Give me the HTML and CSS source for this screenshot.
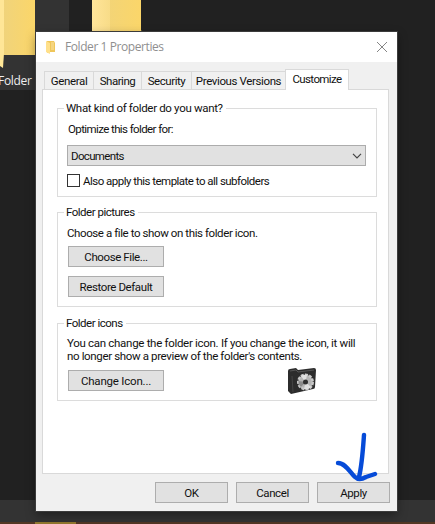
FILE: index.html
```html
<!DOCTYPE html>
<html lang="en">
<head>
<meta charset="utf-8">
<title>Folder 1 Properties</title>
<link rel="stylesheet" href="styles.css">
</head>
<body>
<div class="desktop">
  <div class="tile"></div>
  <svg class="desk-folders" width="150" height="72" viewBox="0 0 150 72">
    <defs>
      <linearGradient id="back" x1="0" x2="1"><stop offset="0" stop-color="#efd37d"/><stop offset="1" stop-color="#fbd669"/></linearGradient>
      <linearGradient id="front" x1="0" x2="1"><stop offset="0" stop-color="#ffe59a"/><stop offset="1" stop-color="#f8dc88"/></linearGradient>
    </defs>
    <path d="M0 0H35V55H0Z" fill="url(#back)"/>
    <path d="M0 0H4V53L3 68L0 66Z" fill="#ffe697"/>
    <path d="M92 0H141V30L142 32H92Z" fill="url(#back)"/>
    <path d="M92 0H110V32H92Z" fill="url(#front)"/>
  </svg>
  <span class="desk-label">Folder 1</span>
  <div class="taskbar"><div class="accent"></div></div>

  <main class="window">
    <header class="titlebar">
      <svg width="10" height="14" viewBox="0 0 10 14"><path d="M1 1H8L9 3V12H4L1 13Z" fill="#efc65a"/><path d="M0 1L4 3V14L0 12Z" fill="#ffe08a"/><path d="M5 2H8V10H5Z" fill="#f5d580"/></svg>
      <h1>Folder 1 Properties</h1>
      <svg class="close" width="12" height="12" viewBox="0 0 12 12"><path d="M1 1L11 11M11 1L1 11" stroke="#858585" fill="none"/></svg>
    </header>
    <nav class="tabs">
      <span class="tab t1">General</span><span class="tab t2">Sharing</span><span class="tab t3">Security</span><span class="tab t4">Previous Versions</span><span class="tab active">Customize</span>
    </nav>
    <section class="panel">
      <div class="group kind">
        <h2>What kind of folder do you want?</h2>
        <p class="s1">Optimize this folder for:</p>
        <div class="select"><span>Documents</span><svg width="10" height="6" viewBox="0 0 10 6"><path d="M1 .8L5 4.8L9 .8" stroke="#444" stroke-width="1.2" fill="none"/></svg></div>
        <div class="check"><i></i><span>Also apply this template to all subfolders</span></div>
      </div>
      <div class="group pictures">
        <h2>Folder pictures</h2>
        <p class="s2">Choose a file to show on this folder icon.</p>
        <div class="btn">Choose File...</div>
        <div class="btn">Restore Default</div>
      </div>
      <div class="group icons">
        <h2>Folder icons</h2>
        <p class="s3">You can change the folder icon. If you change the icon, it will</p>
        <p class="s4">no longer show a preview of the folder's contents.</p>
        <div class="row">
          <div class="btn change">Change Icon...</div>
          <svg class="cam" width="30" height="28" viewBox="0 0 30 28">
            <path d="M1 4Q1 2 3 2L9 1L11 3L27 1Q29 1 29 3L28 20Q28 22 26 22L4 27L1 24Z" fill="#2c2c2c"/>
            <path d="M3 4L9 3L11 5L27 3" stroke="#555" fill="none"/>
            <path d="M5 9L6 25" stroke="#444"/>
            <circle cx="18.500" cy="15" r="7.300" fill="#b5b5b5" stroke="#c9c9c9" stroke-width="2.400" stroke-dasharray="3 1.200"/>
            <path d="M18.500 15L14 9A7 7 0 0 1 20 8ZM18.500 15L24 20A7 7 0 0 1 17 22Z" fill="#e0e0e0"/>
            <path d="M18.500 15L11.500 14A7 7 0 0 0 14 20Z" fill="#8b8b8b"/>
            <circle cx="18.500" cy="15" r="2.500" fill="#303030"/>
          </svg>
        </div>
      </div>
    </section>
    <footer>
      <div class="btn">OK</div><div class="btn">Cancel</div><div class="btn">Apply</div>
    </footer>
  </main>
  <svg class="arrow" width="46" height="52" viewBox="0 0 46 52"><path d="M29 4C28 18 27 34 24 46M3 32C11 32 16 43 20 46Q24 50 31 46L40 43" fill="none" stroke="#064bd8" stroke-width="4.400" stroke-linecap="round" stroke-linejoin="round"/></svg>
</div>
</body>
</html>
```
FILE: styles.css
```css
* { box-sizing: border-box; }
body { margin: 0; font: 11.5px/14px Roboto, "Liberation Sans", sans-serif; color: #111; }
h1, h2, p { margin: 0; font-weight: 400; white-space: nowrap; }
svg { display: block; flex: none; }
.desktop { position: relative; width: 435px; height: 524px; overflow: hidden; background: #212121; }
.tile { position: absolute; left: 0; top: 0; width: 69px; height: 90px; background: #333; }
.desk-folders { position: absolute; left: 0; top: 0; }
.desk-label { position: absolute; left: -2px; top: 74px; color: #eee; font: 12px/14px "Open Sans", sans-serif; letter-spacing: -.3px; word-spacing: 2px; white-space: nowrap; }
.taskbar { position: absolute; left: 0; right: 0; top: 500px; height: 24px; background: #333; border-bottom: 2px solid #533724; }
.accent { position: absolute; left: 35px; bottom: -2px; width: 41px; height: 2px; background: #92782e; }
.window { position: absolute; left: 36px; top: 32px; width: 361px; height: 479px; background: #f0f0f0; box-shadow: 0 0 0 1px #3b3b3b, 0 4px 10px #0006; display: flex; flex-direction: column; }
.titlebar { height: 30px; background: #fff; display: flex; align-items: center; padding: 0 9px 0 10px; }
h1 { margin-left: 9px; font: 12px/16px "Open Sans", sans-serif; letter-spacing: -.42px; color: #8f8f8f; }
.close { margin-left: auto; }
.tabs { height: 27px; padding-left: 8px; display: flex; align-items: flex-end; }
.tab { height: 18px; padding-top: 2px; border: 1px solid #d9d9d9; border-width: 1px 0 0 1px; text-align: center; white-space: nowrap; }
.t1 { width: 49px; letter-spacing: -.35px; }
.t2 { width: 48px; letter-spacing: -.5px; }
.t3 { width: 50px; letter-spacing: -.45px; }
.t4 { width: 94px; letter-spacing: -.38px; }
.active { width: 64px; height: 21px; margin-bottom: -1px; background: #fff; border-right-width: 1px; letter-spacing: -.6px; z-index: 1; }
.panel { width: 347px; height: 385px; margin-left: 6px; padding: 18px 11px 0 14px; background: #fff; border: 1px solid #d9d9d9; }
.group { border: 1px solid #dcdcdc; padding: 0 10px 0 9px; }
h2 { width: max-content; margin: -8px 0 0 -3px; padding: 0 3px 0 2px; background: #fff; font-size: 11.5px; line-height: 14px; letter-spacing: -.5px; }
.kind { height: 89px; }
.kind h2 { letter-spacing: -.33px; }
.kind p { margin: 7px 0 0 1px; letter-spacing: -.6px; }
.select { height: 21px; margin: 9px 0 0; padding: 0 3px 0 3px; display: flex; align-items: center; justify-content: space-between; background: #e1e1e1; border: 1px solid #acacac; letter-spacing: -.65px; }
.check { display: flex; align-items: center; gap: 3px; margin-top: 8px; height: 13px; white-space: nowrap; letter-spacing: -.52px; }
.check i { width: 13px; height: 13px; border: 1px solid #333; }
.pictures { height: 95px; margin-top: 15px; }
.pictures p { margin: 7px 0 6px 0; letter-spacing: -.41px; }
.btn { height: 21px; background: #e1e1e1; border: 1px solid #adadad; display: flex; align-items: center; justify-content: center; white-space: nowrap; letter-spacing: -.4px; }
.group .btn { width: 96px; margin-left: 1px; }
.group .change { letter-spacing: -.2px; }
.pictures .btn + .btn { margin-top: 9px; }
.icons { height: 78px; margin-top: 16px; }
.icons p { line-height: 13px; }
.icons .s3 { margin-top: 7px; letter-spacing: -.3px; }
.icons .s4 { letter-spacing: -.36px; }
.row { display: flex; margin-top: 7px; }
.cam { margin: -3px 0 0 123px; }
footer { display: flex; justify-content: flex-end; gap: 8px; padding: 8px 7px 0 0; }
footer .btn { width: 73px; }
.arrow { position: absolute; left: 335px; top: 431px; }
```
